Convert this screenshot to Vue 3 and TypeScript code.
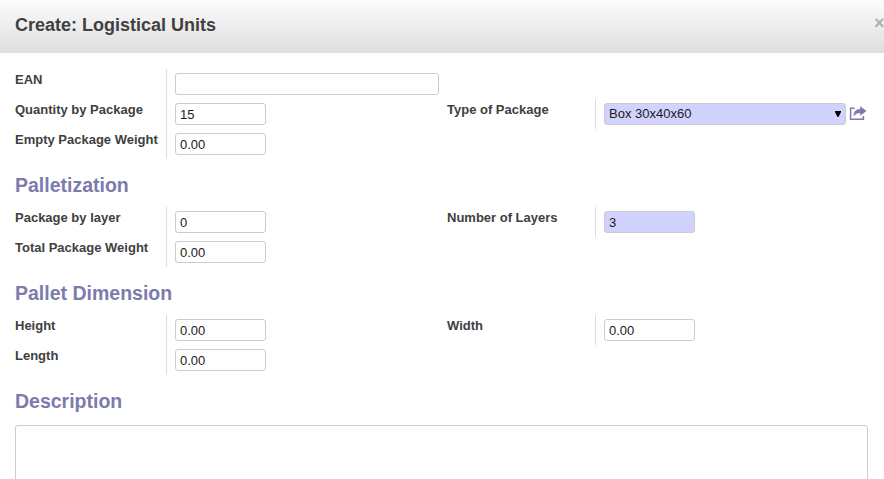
<script setup lang="ts">
import { ref } from 'vue'

interface Field {
  label: string
  value: string
  kind?: 'wide' | 'select'
  required?: boolean
}

interface Section {
  title?: string
  left: Field[]
  right: Field[]
  offset?: boolean
}

const sections = ref<Section[]>([
  {
    left: [
      { label: 'EAN', value: '', kind: 'wide' },
      { label: 'Quantity by Package', value: '15' },
      { label: 'Empty Package Weight', value: '0.00' },
    ],
    right: [{ label: 'Type of Package', value: 'Box 30x40x60', kind: 'select', required: true }],
    offset: true,
  },
  {
    title: 'Palletization',
    left: [
      { label: 'Package by layer', value: '0' },
      { label: 'Total Package Weight', value: '0.00' },
    ],
    right: [{ label: 'Number of Layers', value: '3', required: true }],
  },
  {
    title: 'Pallet Dimension',
    left: [
      { label: 'Height', value: '0.00' },
      { label: 'Length', value: '0.00' },
    ],
    right: [{ label: 'Width', value: '0.00' }],
  },
])

const description = ref('')
</script>

<template>
  <div class="dialog">
    <header class="titlebar">
      <h1 class="title">Create: Logistical Units</h1>
      <button class="close" type="button" aria-label="Close">×</button>
    </header>

    <main class="form">
      <section v-for="(section, i) in sections" :key="i">
        <h2 v-if="section.title" class="heading">{{ section.title }}</h2>
        <div class="group">
          <div
            v-for="(fields, side) in [section.left, section.right]"
            :key="side"
            class="column"
            :class="{ right: side === 1, offset: side === 1 && section.offset }"
          >
            <label v-for="field in fields" :key="field.label" class="row">
              <span class="label">{{ field.label }}</span>
              <span class="cell">
                <template v-if="field.kind === 'select'">
                  <span class="control select required">
                    <span>{{ field.value }}</span>
                    <svg class="arrow" width="6" height="6" viewBox="0 0 6 6"><path d="M0 0H6V1L3.5 6H2.5L0 1Z" /></svg>
                  </span>
                  <svg class="share" width="18" height="15" viewBox="0 0 18 15">
                    <path d="M5.6 2.2H1.6V13.2H14.4V10" fill="none" stroke="currentColor" stroke-width="1.5" />
                    <path d="M11.2 0.2L17.5 5L11.2 9.8V6.9C8.3 6.8 6.4 7.7 4.7 10.4C4.4 6 6.6 3.2 11.2 3Z" fill="currentColor" />
                  </svg>
                </template>
                <input
                  v-else
                  v-model="field.value"
                  type="text"
                  class="control"
                  :class="{ wide: field.kind === 'wide', required: field.required }"
                />
              </span>
            </label>
          </div>
        </div>
      </section>

      <section>
        <h2 class="heading">Description</h2>
        <textarea v-model="description" class="description" aria-label="Description"></textarea>
      </section>
    </main>
  </div>
</template>

<style>
body {
  background: #fff;
  overflow: hidden;
}
</style>

<style scoped>
.dialog {
  width: 884px;
  height: 479px;
  overflow: hidden;
  color: #404040;
  font: 13px/18px 'Liberation Sans', Arial, sans-serif;
}

.titlebar {
  box-sizing: border-box;
  display: flex;
  justify-content: space-between;
  height: 53px;
  padding: 15px 0 0 15px;
  background: linear-gradient(to bottom, #fcfcfc, #dedede);
}

.title {
  margin: 0;
  font-size: 18px;
  line-height: 20px;
}

.close {
  width: 10px;
  height: 16px;
  margin: 0;
  padding: 0;
  border: 0;
  background: none;
  color: #b0b0b0;
  font: bold 18px/16px 'Liberation Sans', Arial, sans-serif;
}

.form {
  padding: 16px 16px 0 15px;
}

.group {
  display: grid;
  grid-template-columns: 432px 1fr;
  align-items: start;
}

.offset {
  padding-top: 30px;
}

.row {
  display: grid;
  grid-template-columns: 151px 1fr;
  height: 30px;
}

.right .row {
  grid-template-columns: 148px 1fr;
}

.label {
  padding-top: 2px;
  font-weight: bold;
  white-space: nowrap;
}

.cell {
  display: flex;
  align-items: flex-start;
  padding: 4px 0 0 8px;
  border-left: 1px solid #ddd;
}

.control {
  box-sizing: border-box;
  width: 91px;
  height: 22px;
  margin: 0;
  padding: 1px 4px;
  border: 1px solid #ccc;
  border-radius: 3px;
  outline: none;
  background: #fff;
  color: #1a1a1a;
  font: 13px/18px 'Liberation Sans', Arial, sans-serif;
}

.wide {
  width: 264px;
}

.required {
  background: #d2d2ff;
}

.select {
  display: flex;
  align-items: center;
  justify-content: space-between;
  width: 242px;
  padding: 0 4px;
}

.arrow {
  fill: #000;
}

.share {
  margin: 3px 0 0 3px;
  color: #7c7bad;
}

.heading {
  box-sizing: border-box;
  height: 48px;
  margin: 0;
  padding-top: 14px;
  color: #7c7bad;
  font-size: 19.5px;
  line-height: 24px;
}

.description {
  box-sizing: border-box;
  display: block;
  width: 853px;
  height: 100px;
  margin-top: 2px;
  padding: 4px;
  border: 1px solid #ccc;
  border-radius: 3px;
  outline: none;
  resize: none;
  font: inherit;
}
</style>
